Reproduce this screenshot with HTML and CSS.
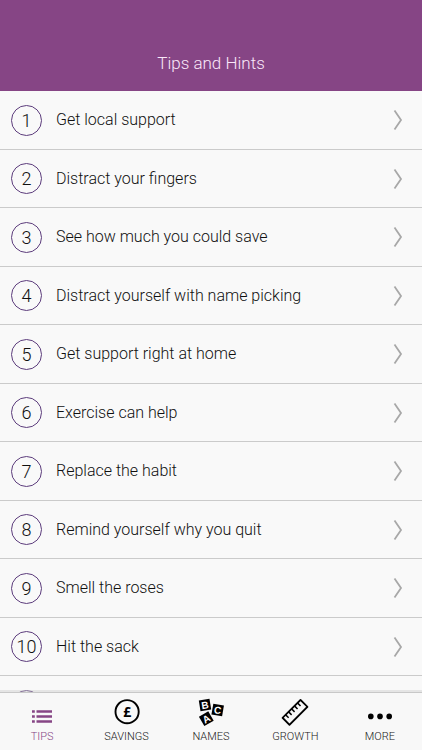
FILE: index.html
```html
<!DOCTYPE html>
<html lang="en">
<head>
<meta charset="utf-8">
<meta name="viewport" content="width=device-width, initial-scale=1">
<title>Tips and Hints</title>
<link rel="stylesheet" href="styles.css">
</head>
<body>
<svg class="defs" aria-hidden="true">
  <symbol id="chevron" viewBox="0 0 10 22"><path d="M1.5 1.5 8 11 1.5 20.5" fill="none" stroke="currentColor" stroke-width="1.8"/></symbol>
</svg>
<header class="header"><h1 class="title">Tips and Hints</h1></header>
<main class="content">
  <ol class="tips">
    <li class="row"><a class="tip" href="#tip1"><span class="number">1</span><span class="text">Get local support</span><svg class="chevron"><use href="#chevron"/></svg></a></li>
    <li class="row"><a class="tip" href="#tip2"><span class="number">2</span><span class="text">Distract your fingers</span><svg class="chevron"><use href="#chevron"/></svg></a></li>
    <li class="row"><a class="tip" href="#tip3"><span class="number">3</span><span class="text">See how much you could save</span><svg class="chevron"><use href="#chevron"/></svg></a></li>
    <li class="row"><a class="tip" href="#tip4"><span class="number">4</span><span class="text">Distract yourself with name picking</span><svg class="chevron"><use href="#chevron"/></svg></a></li>
    <li class="row"><a class="tip" href="#tip5"><span class="number">5</span><span class="text">Get support right at home</span><svg class="chevron"><use href="#chevron"/></svg></a></li>
    <li class="row"><a class="tip" href="#tip6"><span class="number">6</span><span class="text">Exercise can help</span><svg class="chevron"><use href="#chevron"/></svg></a></li>
    <li class="row"><a class="tip" href="#tip7"><span class="number">7</span><span class="text">Replace the habit</span><svg class="chevron"><use href="#chevron"/></svg></a></li>
    <li class="row"><a class="tip" href="#tip8"><span class="number">8</span><span class="text">Remind yourself why you quit</span><svg class="chevron"><use href="#chevron"/></svg></a></li>
    <li class="row"><a class="tip" href="#tip9"><span class="number">9</span><span class="text">Smell the roses</span><svg class="chevron"><use href="#chevron"/></svg></a></li>
    <li class="row"><a class="tip" href="#tip10"><span class="number">10</span><span class="text">Hit the sack</span><svg class="chevron"><use href="#chevron"/></svg></a></li>
    <li class="row"><div class="tip"><span class="number"></span></div></li>
  </ol>
</main>
<nav class="tabs">
  <a class="tab active" href="#tips">
    <svg class="icon" viewBox="0 0 30 30" fill="currentColor"><path d="M5 13.3h2.8v2.4H5zM9.5 13.3h15.5v2.4H9.5zM5 18.3h2.8v2.4H5zM9.5 18.3h15.5v2.4H9.5zM5 23.3h2.8v2.4H5zM9.5 23.3h15.5v2.4H9.5z"/></svg>
    <span>TIPS</span>
  </a>
  <a class="tab" href="#savings">
    <svg class="icon" viewBox="0 0 30 30"><circle cx="15.1" cy="14.7" r="11.6" fill="none" stroke="#000" stroke-width="1.9"/><text class="pound" x="15.3" y="19.7" text-anchor="middle">£</text></svg>
    <span>SAVINGS</span>
  </a>
  <a class="tab" href="#names">
    <svg class="icon" viewBox="0 0 30 30">
      <g transform="translate(9 8) rotate(-9)"><rect x="-5.4" y="-5.4" width="10.8" height="10.8"/><text class="block" y="3.6" text-anchor="middle">B</text></g>
      <g transform="translate(21.7 13) rotate(10)"><rect x="-5.4" y="-5.4" width="10.8" height="10.8"/><text class="block" y="3.6" text-anchor="middle">C</text></g>
      <g transform="translate(10.3 21.7) rotate(-30)"><rect x="-5.4" y="-5.4" width="10.8" height="10.8"/><text class="block" y="3.6" text-anchor="middle">A</text></g>
    </svg>
    <span>NAMES</span>
  </a>
  <a class="tab" href="#growth">
    <svg class="icon" viewBox="0 0 30 30"><g transform="translate(15 15.3) rotate(-45)" fill="none" stroke="#000" stroke-width="1.8"><rect x="-12.7" y="-4.9" width="25.4" height="9.8" stroke-linejoin="round"/><path d="M-8.4-4.9v4.3M-4.2-4.9v4.3M0-4.9v4.3M4.2-4.9v4.3M8.4-4.9v4.3" stroke-width="1.5"/></g></svg>
    <span>GROWTH</span>
  </a>
  <a class="tab" href="#more">
    <svg class="icon" viewBox="0 0 30 30"><circle cx="5.8" cy="19.4" r="2.8"/><circle cx="15" cy="19.4" r="2.8"/><circle cx="24.2" cy="19.4" r="2.8"/></svg>
    <span>MORE</span>
  </a>
</nav>
</body>
</html>
```
FILE: styles.css
```css
* { box-sizing: border-box; }

body {
  margin: 0;
  height: 100vh;
  display: flex;
  flex-direction: column;
  background: #f9f9f9;
  color: #101010;
  font-family: Roboto, "Liberation Sans", sans-serif;
  font-weight: 300;
}

a { color: inherit; text-decoration: none; }

.defs { display: none; }

.header {
  flex: none;
  padding: 52px 16px 17px;
  background: #864585;
  color: #fae8fa;
  text-align: center;
}

.title {
  margin: 0;
  font-size: 17px;
  line-height: 22px;
  font-weight: 300;
}

.content {
  flex: 1;
  min-height: 0;
  overflow: hidden;
}

.tips {
  margin: 0;
  padding: 0;
  list-style: none;
}

.row {
  height: 58px;
  border-bottom: 1px solid #cbcbcb;
}

.row:nth-child(odd) { height: 59px; }

.tip {
  height: 100%;
  display: flex;
  align-items: center;
  padding: 0 19px 0 11px;
}

.number {
  width: 31px;
  height: 31px;
  margin-right: 14px;
  border: 1px solid #5c3c7c;
  border-radius: 50%;
  font-size: 18px;
  line-height: 30px;
  text-align: center;
}

.text {
  flex: 1;
  font-size: 16px;
  line-height: 20px;
}

.chevron {
  width: 10px;
  height: 22px;
  color: #a8a8a8;
}

.tabs {
  position: relative;
  flex: none;
  display: grid;
  grid-template-columns: repeat(5, 1fr);
  padding: 4px 0 6px;
  border-top: 1px solid #c8c8c8;
  background: #f8f8f8;
}

.tabs::before {
  content: "";
  position: absolute;
  left: 0;
  right: 0;
  bottom: 100%;
  height: 3px;
  background: rgba(200, 200, 200, 0.4);
}

.tab {
  display: flex;
  flex-direction: column;
  align-items: center;
  gap: 3px;
  color: #202020;
  font-size: 11px;
  line-height: 14px;
}

.active { color: #864585; }

.icon {
  width: 30px;
  height: 30px;
}

.pound {
  font: bold 14px "Open Sans", sans-serif;
}

.block {
  fill: #fff;
  font: bold 10px "Liberation Sans", sans-serif;
}
```
